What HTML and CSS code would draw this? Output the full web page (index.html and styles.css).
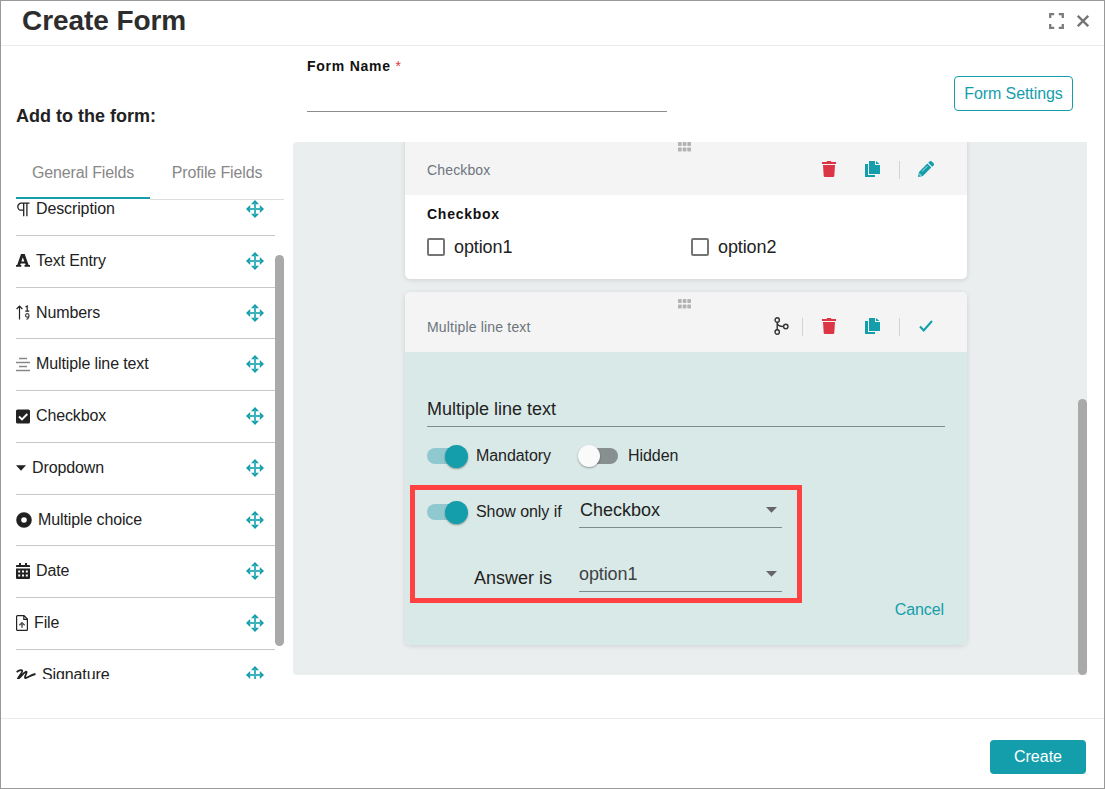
FILE: index.html
```
<!DOCTYPE html>
<html lang="en">
<head>
<meta charset="utf-8">
<title>Create Form</title>
<link rel="stylesheet" href="styles.css">
</head>
<body>
<svg class="defs" aria-hidden="true">
  <symbol id="move" viewBox="0 0 18 18"><path d="M9 0l4 4.200H5zM9 18l4-4.200H5zM0 9l4.200-4v8zM18 9l-4.200-4v8z" fill="#149eab"/><path d="M9 3v12M3 9h12" stroke="#3fb3bd" stroke-width="2"/></symbol>
  <symbol id="dots" viewBox="0 0 13 10"><g fill="#b3b3b3"><rect width="3.700" height="4" rx=".8"/><rect x="4.700" width="3.700" height="4" rx=".8"/><rect x="9.300" width="3.700" height="4" rx=".8"/><rect y="5.500" width="3.700" height="4" rx=".8"/><rect x="4.700" y="5.500" width="3.700" height="4" rx=".8"/><rect x="9.300" y="5.500" width="3.700" height="4" rx=".8"/></g></symbol>
  <symbol id="trash" viewBox="0 0 14 16"><path d="M0 1h4.500l.7-1h3.600l.7 1H14v2H0zM1 4h12l-.7 10.800a1.300 1.300 0 0 1-1.300 1.200H3a1.300 1.300 0 0 1-1.300-1.200z" fill="#dc3545"/></symbol>
  <symbol id="copy" viewBox="0 0 15 16"><path d="M4 0h6v4h5v9H4zM11 0l3.500 3H11zM0 3h3v11h7v2H0z" fill="#149eab"/></symbol>
  <symbol id="pencil" viewBox="0 0 16 16"><path d="M9.300 2.600l4 4L4.800 15 .4 16 0 15.600 1 11zM10.200 1.700L11.600.4a1.500 1.500 0 0 1 2.100 0l1.900 1.900a1.500 1.500 0 0 1 0 2.100l-1.400 1.400z" fill="#149eab"/><path d="M4 10.500l5.500-5.500M1.800 12.500v1.700h1.800" stroke="#c4e6e9" stroke-width=".9" fill="none"/></symbol>
  <symbol id="branch" viewBox="0 0 15 18"><g fill="none" stroke="#333" stroke-width="1.400"><circle cx="3.200" cy="3" r="2.200"/><circle cx="3.200" cy="15" r="2.200"/><circle cx="11.800" cy="9.500" r="2.200"/><path d="M3.200 5.200v7.600M3.200 5.500c0 3 2 4 6.400 4"/></g></symbol>
  <symbol id="caret" viewBox="0 0 11 6"><path d="M0 0h11L5.500 5.700z"/></symbol>
</svg>
<main class="modal">
  <header class="modal-head">
    <h1>Create Form</h1>
    <svg class="expand" viewBox="0 0 15 16"><path d="M1.200 5V1.200h4M9.800 1.200h4V5M13.800 11v3.800h-4M5.200 14.800h-4V11" fill="none" stroke="#7c7c7c" stroke-width="2.300"/></svg>
    <svg class="close" viewBox="0 0 12 12"><path d="M.8.800l10.400 10.400M11.200.800L.8 11.200" stroke="#757575" stroke-width="2.300"/></svg>
  </header>
  <div class="modal-body">
    <aside class="palette">
      <h2>Add to the form:</h2>
      <nav class="tabs"><span class="tab active">General Fields</span><span class="tab">Profile Fields</span></nav>
      <div class="scroller">
        <ul class="fields">
          <li><svg class="i14" viewBox="0 0 14 15"><path d="M13.500 1.200H5.300a3.500 3.500 0 0 0 0 7H7M7.700 1.200v13M10.900 1.200v13" fill="none" stroke="#222" stroke-width="1.300"/></svg><span>Description</span><svg class="move"><use href="#move"/></svg></li>
          <li><svg class="i14" viewBox="0 0 14 14"><path d="M5 .6h3.700l3.900 11H14V13.300H8.500v-1.700h1.100l-.5-1.600H4.700l-.5 1.600h1.100v1.700H0v-1.700h1.200zM6.800 3.800L5.400 8h2.900z" fill="#222" fill-rule="evenodd"/></svg><span>Text Entry</span><svg class="move"><use href="#move"/></svg></li>
          <li><svg class="i14" viewBox="0 0 14 15"><path d="M3.500 14.500V1.200M.6 4l2.900-2.900L6.400 4M9.500 2.100l1.700-1v5M9.300 6.200h4" fill="none" stroke="#222" stroke-width="1.200"/><path d="M13 10.400a1.700 1.700 0 1 1-3.400 0a1.700 1.700 0 0 1 3.400 0q0 3-2.500 4" fill="none" stroke="#444" stroke-width="1.200"/></svg><span>Numbers</span><svg class="move"><use href="#move"/></svg></li>
          <li><svg class="i14" viewBox="0 0 14 15"><path d="M3 1.500h8M0 5.500h14M3 9.500h8M0 13.500h14" stroke="#888" stroke-width="1.700"/></svg><span>Multiple line text</span><svg class="move"><use href="#move"/></svg></li>
          <li><svg class="i14" viewBox="0 0 14 14"><rect width="14" height="14" rx="1.500" fill="#222"/><path d="M3 7l3 3 5.300-5.500" fill="none" stroke="#fff" stroke-width="1.900"/></svg><span>Checkbox</span><svg class="move"><use href="#move"/></svg></li>
          <li><svg class="i10" viewBox="0 0 10 6"><path d="M0 .300h10L5 5.800z" fill="#222"/></svg><span>Dropdown</span><svg class="move"><use href="#move"/></svg></li>
          <li><svg class="i16" viewBox="0 0 16 16"><circle cx="8" cy="8" r="5.300" fill="none" stroke="#222" stroke-width="5"/></svg><span>Multiple choice</span><svg class="move"><use href="#move"/></svg></li>
          <li><svg class="i14 tall" viewBox="0 0 14 16"><path d="M0 4V3q0-1 1-1h2V0h2v2h4V0h2v2h2q1 0 1 1v1zM0 5.500h14V15q0 1-1 1H1q-1 0-1-1z" fill="#222"/><path d="M2.200 7.500h2v2h-2zM6 7.500h2v2H6zM9.800 7.500h2v2h-2zM2.200 11.500h2v2h-2zM6 11.500h2v2H6zM9.800 11.500h2v2h-2z" fill="#fff"/></svg><span>Date</span><svg class="move"><use href="#move"/></svg></li>
          <li><svg class="i12" viewBox="0 0 12 16"><path d="M1.500.600H8l3.400 3.500v10.400q0 .9-.9.900h-9q-.9 0-.9-.9v-13q0-.9.900-.9zM7.800.600v3.700h3.600" fill="none" stroke="#222" stroke-width="1.200"/><path d="M6 12.800V8M3.300 10.300L6 7.700l2.700 2.600" fill="none" stroke="#555" stroke-width="1.500"/></svg><span>File</span><svg class="move"><use href="#move"/></svg></li>
          <li><svg class="i20" viewBox="0 0 20 12"><path d="M.8 3.200C2 1.500 5.800.300 6.200 2S2.500 7.500 1.600 10.200C4.500 8.500 8.500 2.600 10.200 2.600S7.500 8.800 9.500 9 14 6 19.500 5" fill="none" stroke="#222" stroke-width="1.800"/></svg><span>Signature</span><svg class="move"><use href="#move"/></svg></li>
        </ul>
        <div class="thumb"></div>
      </div>
    </aside>
    <section class="editor">
      <div class="form-top">
        <label class="form-name"><b>Form Name</b> <i>*</i></label>
        <button class="outline">Form Settings</button>
      </div>
      <div class="canvas">
        <div class="cards">
          <article class="card">
            <div class="card-head">
              <svg class="dots"><use href="#dots"/></svg>
              <div class="card-bar"><span class="card-type">Checkbox</span>
                <span class="act wide"><svg class="trash"><use href="#trash"/></svg></span>
                <span class="act"><svg class="copy"><use href="#copy"/></svg></span>
                <i class="sep gap"></i>
                <span class="act wide"><svg class="pencil"><use href="#pencil"/></svg></span>
              </div>
            </div>
            <div class="answers">
              <b>Checkbox</b>
              <div class="options"><label><i class="box"></i>option1</label><label><i class="box"></i>option2</label></div>
            </div>
          </article>
          <article class="card">
            <div class="card-head">
              <svg class="dots"><use href="#dots"/></svg>
              <div class="card-bar"><span class="card-type spaced">Multiple line text</span>
                <span class="act mid"><svg class="branch"><use href="#branch"/></svg></span>
                <i class="sep"></i>
                <span class="act wide"><svg class="trash"><use href="#trash"/></svg></span>
                <span class="act"><svg class="copy"><use href="#copy"/></svg></span>
                <i class="sep gap"></i>
                <span class="act wide"><svg class="tick" viewBox="0 0 14 12"><path d="M1 6.500l3.700 4L13 1" fill="none" stroke="#149eab" stroke-width="2"/></svg></span>
              </div>
            </div>
            <div class="settings">
              <div class="question">Multiple line text</div>
              <div class="switches">
                <span class="cell"><i class="toggle on"></i>Mandatory</span>
                <span class="cell"><i class="toggle"></i>Hidden</span>
              </div>
              <div class="condition">
                <span class="cell show"><i class="toggle on"></i>Show only if</span>
                <div class="select">Checkbox<svg class="caret"><use href="#caret"/></svg></div>
                <span class="answer-is">Answer is</span>
                <div class="select second">option1<svg class="caret"><use href="#caret"/></svg></div>
                <div class="highlight"></div>
              </div>
              <a class="cancel">Cancel</a>
            </div>
          </article>
        </div>
        <div class="thumb"></div>
      </div>
    </section>
  </div>
  <footer class="modal-foot"><button class="primary">Create</button></footer>
</main>
</body>
</html>
```
FILE: styles.css
```
* { box-sizing: border-box; }
body { margin: 0; font: 16px/20px "Liberation Sans", Arial, sans-serif; color: #222; background: #fff; }
svg { display: block; flex: none; }
i { font-style: normal; }
button { font: inherit; margin: 0; padding: 0; }
.defs { position: absolute; width: 0; height: 0; }

.modal { width: 1105px; height: 789px; border: 1px solid #999; display: flex; flex-direction: column; overflow: hidden; }
.modal-head { height: 45px; flex: none; border-bottom: 1px solid #e9ebec; display: flex; align-items: center; padding: 0 15px 4px 21px; }
h1 { margin: 0 auto 0 0; font-size: 28px; line-height: 32px; color: #2d2d2d; letter-spacing: -.08px; }
.expand { width: 15px; height: 16px; margin-right: 13px; }
.close { width: 12px; height: 12px; }
.modal-body { flex: 1; display: flex; padding: 0 17px 0 15px; min-height: 0; }
.modal-foot { height: 70px; flex: none; border-top: 1px solid #e9ebec; display: flex; justify-content: flex-end; padding: 21px 18px 0 0; }
.primary { width: 96px; height: 34px; border: 0; border-radius: 4px; background: #149eab; color: #fff; }

.palette { width: 268px; margin-right: 9px; flex: none; }
h2 { margin: 60px 0 0; font-size: 18px; line-height: 20px; }
.tabs { display: flex; height: 54px; margin-top: 20px; }
.tab { width: 134px; color: #888; text-align: center; line-height: 54px; height: 54px; border-bottom: 1px solid #ddd; white-space: nowrap; letter-spacing: -.13px; }
.tab.active { border-bottom: 2px solid #149eab; height: 53px; }
.scroller { height: 479px; overflow: hidden; display: flex; }
.fields { list-style: none; width: 259px; margin: -16px 0 0; padding: 0; letter-spacing: -.12px; }
.fields li { height: 51.750px; border-bottom: 1px solid #c8c8c8; display: flex; align-items: center; gap: 6px; padding-bottom: .6px; }
.move { width: 18px; height: 18px; margin: 0 11px 0 auto; }
.i14 { width: 14px; height: 15px; }
.i14.tall { height: 16px; }
.i10 { width: 10px; height: 6px; }
.i12 { width: 12px; height: 16px; }
.i16 { width: 16px; height: 16px; }
.i20 { width: 20px; height: 12px; }
.scroller .thumb { width: 9px; height: 391px; margin-top: 55px; border-radius: 5px; background: #a9a9a9; }

.editor { flex: 1; }
.form-top { height: 96px; display: flex; justify-content: space-between; padding: 0 14px 0 14px; }
.form-name { width: 360px; height: 66px; border-bottom: 1px solid #8c8c8c; padding-top: 10px; font-size: 14px; color: #111; letter-spacing: .75px; }
.form-name i { color: #dc3545; font-size: 14px; }
.outline { width: 119px; height: 35px; margin-top: 30px; border: 1px solid #149eab; border-radius: 4px; background: #fff; color: #149eab; letter-spacing: -.1px; }
.canvas { height: 533px; background: #eaeeef; border-radius: 4px 0 0 4px; display: flex; justify-content: space-between; overflow: hidden; }
.cards { width: 562px; margin: -7px 0 0 112px; }
.canvas .thumb { width: 9px; height: 276px; margin-top: 257px; border-radius: 5px; background: #a9a9a9; }
.card { background: #fff; border-radius: 5px; box-shadow: 0 1px 5px rgba(0,0,0,.12); margin-bottom: 13px; overflow: hidden; }
.card-head { height: 60px; background: #f4f4f4; padding-top: 7px; }
.dots { width: 13px; height: 10px; margin: 0 0 0 273px; }
.card-bar { height: 35px; display: flex; align-items: center; padding: 0 15px 0 22px; }
.card-type { margin-right: auto; font-size: 14px; color: #6c757d; padding-top: 1px; letter-spacing: .15px; }
.card-type.spaced { letter-spacing: .18px; }
.act { width: 34px; display: flex; justify-content: center; }
.act.wide { width: 52px; }
.act.mid { width: 40px; }
.sep { width: 1px; height: 18px; background: #d3d3d3; }
.sep.gap { margin-left: 10px; }
.trash, .copy, .pencil, .branch { margin-top: -1px; }
.trash { width: 14px; height: 16px; }
.copy { width: 15px; height: 16px; }
.pencil { width: 16px; height: 16px; }
.branch { width: 15px; height: 18px; margin-right: 1px; }
.tick { width: 14px; height: 12px; margin-top: -1px; }
.answers { height: 84px; padding: 9px 22px 0; }
.answers b { display: block; font-size: 14px; color: #111; letter-spacing: .75px; }
.options { display: flex; margin-top: 13px; font-size: 18px; letter-spacing: -.1px; }
.options label { width: 264px; flex: none; display: flex; align-items: center; gap: 9px; }
.options label:last-child { width: 254px; }
.box { width: 18px; height: 18px; border: 2px solid #757575; border-radius: 2px; }

.settings { height: 293px; background: #d9e9e7; padding: 0 22px; display: flex; flex-direction: column; }
.question { height: 75px; border-bottom: 1px solid #7f8c8b; padding-top: 47px; font-size: 18px; }
.switches { height: 58px; display: grid; grid-template-columns: 152px 203px; }
.cell { display: flex; align-items: center; gap: 10px; white-space: nowrap; letter-spacing: -.06px; }
.toggle { width: 39px; height: 16px; border-radius: 8px; background: #878f8f; display: flex; align-items: center; }
.toggle::before { content: ""; width: 22px; height: 22px; flex: none; margin-left: -1px; border-radius: 50%; background: #fafafa; box-shadow: 0 1px 2px rgba(0,0,0,.35); }
.toggle.on { background: #8fc9cf; justify-content: flex-end; }
.toggle.on::before { width: 23px; height: 23px; margin-right: -2px; background: #149eab; }
.condition { position: relative; height: 118px; display: grid; grid-template: 43px 64px / 152px 203px; }
.show { padding-top: 11px; }
.select { border-bottom: 1px solid #7f8c8b; display: flex; justify-content: space-between; align-items: center; padding: 7px 5px 0 1px; font-size: 18px; }
.select.second { padding: 28px 5px 0 0; color: #3c4343; letter-spacing: -.1px; }
.caret { width: 11px; height: 6px; fill: #666; margin-top: 1px; }
.answer-is { font-size: 18px; padding: 40px 0 0 47px; }
.highlight { position: absolute; left: -17px; top: 0; width: 392px; height: 118px; border: 5px solid #ff4141; }
.cancel { align-self: flex-end; line-height: 14px; color: #149eab; margin-right: 1px; letter-spacing: -.1px; }
```
